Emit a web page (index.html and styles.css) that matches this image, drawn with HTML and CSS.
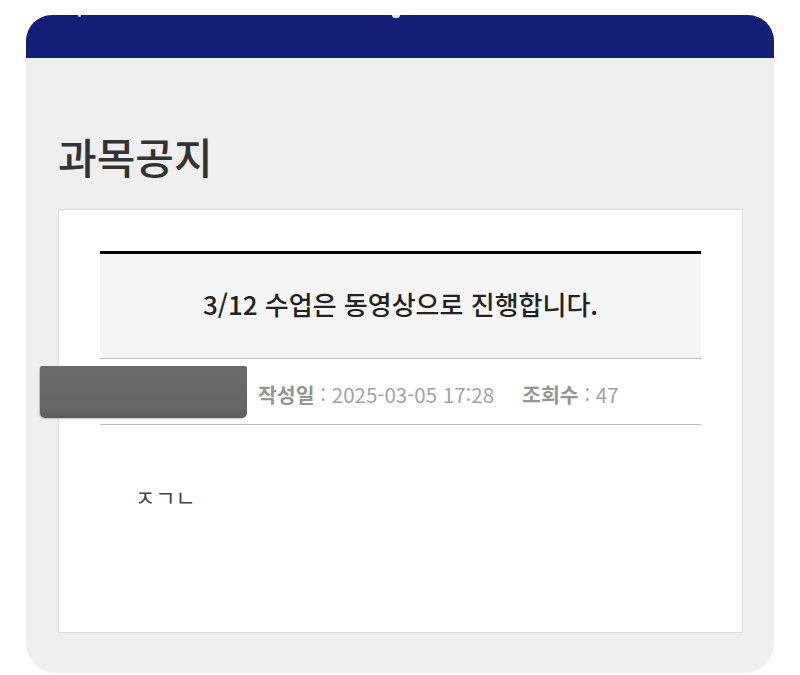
FILE: index.html
```html
<!DOCTYPE html>
<html lang="ko">
<head>
<meta charset="utf-8">
<title>과목공지</title>
<link rel="stylesheet" href="styles.css">
</head>
<body>
<div class="phone">
  <header class="appbar">
    <span class="bar-mark mark-back"></span>
    <span class="bar-mark mark-title"></span>
  </header>
  <main class="content">
    <h1 class="page-title">과목공지</h1>
    <section class="card">
      <div class="post-head">
        <h2 class="post-title">3/12 수업은 동영상으로 진행합니다.</h2>
      </div>
      <div class="post-meta">
        <span class="meta-author"></span>
        <span class="meta-item"><b class="meta-label">작성일</b> : 2025-03-05 17:28</span>
        <span class="meta-item"><b class="meta-label">조회수</b> : 47</span>
        <span class="redact"></span>
      </div>
      <div class="post-body">ㅈㄱㄴ</div>
    </section>
  </main>
</div>
</body>
</html>
```

FILE: styles.css
```css
html, body {
  margin: 0;
  padding: 0;
  background: #ffffff;
}

body {
  font-family: "Noto Sans CJK KR", "Noto Sans", sans-serif;
  color: #333;
}

.phone {
  margin: 15px 26px 0 26px;
  height: 658px;
  background: #efefef;
  border-radius: 26px 26px 30px 30px;
  overflow: hidden;
  display: flex;
  flex-direction: column;
}

.appbar {
  position: relative;
  height: 43px;
  flex: none;
  background: #131e77;
}

.bar-mark {
  position: absolute;
  top: 0;
  background: #dfe2f0;
}

.mark-back {
  left: 52px;
  width: 3px;
  height: 2px;
  border-radius: 0 0 2px 2px;
}

.mark-title {
  left: 366px;
  width: 8px;
  height: 3px;
  border-radius: 0 0 4px 4px;
}

.content {
  padding: 0 31px 0 32px;
}

.page-title {
  margin: 70px 0 0 0;
  font-size: 42px;
  line-height: 56px;
  font-weight: 500;
  color: #333;
  letter-spacing: 0;
}

.card {
  box-sizing: border-box;
  margin-top: 25px;
  height: 424px;
  background: #fff;
  border: 1px solid #dcdcdc;
  padding: 41px 41px 0 41px;
}

.post-head {
  border-top: 3px solid #000;
  border-bottom: 1px solid #bdbdbd;
  background: #f5f5f5;
  height: 104px;
  display: flex;
  align-items: center;
  justify-content: center;
}

.post-title {
  margin: 0;
  font-size: 26px;
  font-weight: 500;
  color: #222;
  padding-bottom: 6px;
}

.post-meta {
  position: relative;
  height: 66px;
  border-bottom: 1px solid #bdbdbd;
  display: flex;
  align-items: center;
  gap: 28px;
  font-size: 20.5px;
  color: #a3a3a3;
  padding-top: 5px;
  box-sizing: border-box;
}

.meta-author {
  width: 130px;
}

.meta-label {
  font-weight: 700;
  color: #959595;
}

.redact {
  position: absolute;
  left: -60px;
  top: 7px;
  width: 207px;
  height: 52px;
  background: linear-gradient(180deg, #6b6b6b 0%, #656565 85%, #5a5a5a 100%);
  border-radius: 2px 2px 5px 5px;
  box-shadow: -1px 1px 1px rgba(90, 100, 160, 0.35);
}

.post-body {
  margin-top: 56px;
  padding-left: 35px;
  font-size: 22px;
  line-height: 30px;
  color: #444;
}
```
